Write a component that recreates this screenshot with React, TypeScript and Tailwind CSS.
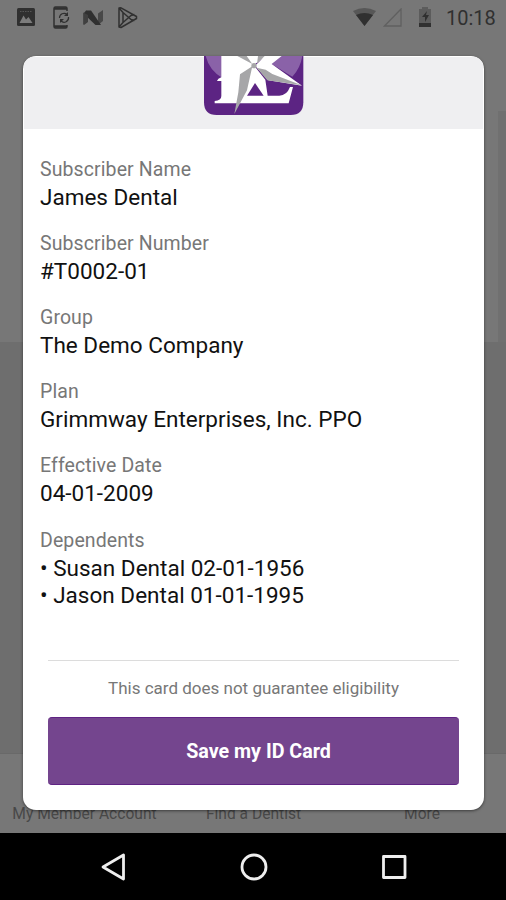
import { Fragment } from 'react'

interface Field {
  label: string
  values: string[]
}

const fields: Field[] = [
  { label: 'Subscriber Name', values: ['James Dental'] },
  { label: 'Subscriber Number', values: ['#T0002-01'] },
  { label: 'Group', values: ['The Demo Company'] },
  { label: 'Plan', values: ['Grimmway Enterprises, Inc. PPO'] },
  { label: 'Effective Date', values: ['04-01-2009'] },
  { label: 'Dependents', values: ['• Susan Dental 02-01-1956', '• Jason Dental 01-01-1995'] },
]

function StatusBar() {
  return (
    <div className="flex h-[35px] items-center text-[#303030]">
      <svg className="ml-[17px] h-[20px] w-[18px]" viewBox="0 0 18 20">
        <rect x="0" y="0" width="18" height="18" rx="1.500" fill="currentColor" />
        <path d="M2.500 15 6.500 7.500l2.500 4L11.500 9 15.500 15z" fill="#7c7c7c" />
        <path d="M3 3.500h12" stroke="#555" strokeDasharray="1.5 1" />
      </svg>
      <svg className="ml-[17px] h-[23px] w-[18px]" viewBox="0 0 18 23" fill="none" stroke="currentColor">
        <path d="M15 5V2.500Q15 1 13.500 1H3.500Q2 1 2 2.500v18Q2 22 3.500 22h10q1.500 0 1.500-1.500V19" strokeWidth="1.500" />
        <path d="M2 2.500h13M2 20.500h13" strokeWidth="2.500" />
        <path d="M7.500 12a4.500 4.500 0 0 1 7.500-3.500M16.500 11a4.500 4.500 0 0 1-7.500 4" strokeWidth="1.200" />
        <path d="M16 6v4h-4zM8 17v-4h4z" fill="currentColor" stroke="none" />
      </svg>
      <svg className="ml-[13px] h-[18px] w-[21px]" viewBox="0 0 21 18">
        <path d="M0 4 4 1.500V13l-4 3zM15 4.500 20 1v11l-5 4z" fill="#484848" />
        <path d="M3 1.500h5L18 16h-5.500L1 5z" fill="currentColor" />
        <path d="m1 4 4 2v7l-4 3z" fill="#404040" />
      </svg>
      <svg className="ml-[13px] h-[22px] w-[21px]" viewBox="0 0 21 22" fill="none" stroke="currentColor" strokeWidth="1.500" strokeLinejoin="round">
        <path d="M2 1 4 .8 19.500 9.500v2L4 20.500l-2-.5zM2 1l4 4.500 8 7 3.500 1M2 20l4-4.500 8-7 3.500-1M6 5.500v10" />
      </svg>
      <svg className="ml-[215px] h-[20px] w-[23px]" viewBox="0 0 23 20">
        <path d="M0 3Q11.500-3 23 3L11.500 18z" fill="#575757" />
        <path d="M3 7q8.500-4 17 0l-8.500 11z" fill="currentColor" />
      </svg>
      <svg className="ml-[7px] h-[20px] w-[20px]" viewBox="0 0 20 20">
        <path d="M1.500 18H18V1z" fill="none" stroke="#606060" strokeWidth="1.300" />
      </svg>
      <svg className="ml-[15px] h-[22px] w-[14px]" viewBox="0 0 14 22">
        <path d="M1 2h3V0h6v2h3v18H1z" fill="#5c5c5c" />
        <path d="M1 16h12v4H1zM9 4 4 10h3v5l4-7H8z" fill="currentColor" />
      </svg>
      <span className="ml-[14px] text-[20px]">10:18</span>
    </div>
  )
}

function Logo() {
  return (
    <svg className="h-[59px] w-[100px]" viewBox="42 33 300 177">
      <path d="M42 33h298v139q0 38-38 38H80q-38 0-38-38z" fill="#5c2483" />
      {/* Globe behind the letter */}
      <path d="M47 33h49v65Q58 76 47 33zM268 33h69q-6 37-30 62l-62-38z" fill="#8a62a8" />
      {/* Letter */}
      <path d="M94 33h136l-39 27 35 44 7 48h35q22 0 32-26h9l-13 49H74v-7q20-1 20-15v-45H81q2-7 13-11z" fill="#fff" />
      <path d="m195 114 26 38h-50z" fill="#5c2483" />
      {/* Star rays */}
      <path d="M225 33h50l-30 24 91 65-101-16-40-44z" fill="#fff" />
      <path d="M142 33h28l17 24zM204 33h20l-23 23z" fill="#a6a6a8" />
      <path d="m187 64-37 24-5 54-12 65 38-71zM200 68l32 38 103 15-88-34-20-13z" fill="#a6a6a8" />
      <circle cx="192" cy="62" r="8" fill="#a6a6a8" />
    </svg>
  )
}

function IdCard() {
  return (
    <section className="mx-[23px] mt-[21px] flex h-[754px] w-[461px] flex-col overflow-hidden rounded-[13px] bg-white shadow-[0_1px_3px_rgba(0,0,0,0.5)]">
      <header className="mx-px mt-px flex h-[72px] justify-center bg-[#efeff1]">
        <div className="-mt-px ml-[1px]">
          <Logo />
        </div>
      </header>
      <dl className="flex h-[531px] flex-col px-[17px] pt-[27px]">
        {fields.map((field) => (
          <Fragment key={field.label}>
            <dt className="h-[28px] text-[19.500px] leading-[28px] tracking-[0.1px] text-[#777]">{field.label}</dt>
            <dd className="mb-[19.120px] whitespace-nowrap text-[22.500px] leading-[27px] tracking-[0.010px] text-[#111]">
              {field.values.map((value) => (
                <div key={value}>{value}</div>
              ))}
            </dd>
          </Fragment>
        ))}
      </dl>
      <footer className="mx-[25px] border-t border-[#dcdcdc] text-center">
        <p className="h-[56px] pt-[14px] text-[17px] leading-[26px] text-[#777]">This card does not guarantee eligibility</p>
        <button className="block h-[68px] w-full rounded-[4px] border-y border-[#5f2383] bg-[#74458e] pl-[10px] pt-[2px] text-[19.700px] font-bold text-white">
          Save my ID Card
        </button>
      </footer>
    </section>
  )
}

function NavigationBar() {
  return (
    <nav className="flex h-[67px] items-center bg-black text-[#eee]">
      <svg className="ml-[100px] h-[30px] w-[28px]" viewBox="0 0 28 30" fill="none" stroke="currentColor" strokeWidth="2.800" strokeLinejoin="round">
        <path d="M3 15 23.500 3v24z" />
      </svg>
      <svg className="ml-[111px] h-[30px] w-[30px]" viewBox="0 0 30 30" fill="none" stroke="currentColor" strokeWidth="2.800">
        <circle cx="15" cy="15" r="12" />
      </svg>
      <svg className="ml-[112px] h-[26px] w-[26px]" viewBox="0 0 26 26" fill="none" stroke="currentColor" strokeWidth="2.800" strokeLinejoin="round">
        <rect x="2.500" y="2.500" width="21.500" height="21" />
      </svg>
    </nav>
  )
}

export default function App() {
  return (
    <div className="relative h-[900px] w-[506px] overflow-hidden bg-[#777] font-['Roboto',sans-serif]">
      {/* Dimmed page behind the card */}
      <div className="absolute inset-0 flex flex-col">
        <div className="flex h-[342px] items-end justify-end">
          <div className="h-[231px] w-[8px] bg-[#707070]" />
        </div>
        <div className="h-[412px] border-b border-[#696969] bg-[#6e6e6e]" />
        <div className="flex h-[79px] pt-[50px] text-[15.600px] leading-[20px] text-[#484848]">
          <span className="w-[169px] text-center">My Member Account</span>
          <span className="w-[169px] text-center">Find a Dentist</span>
          <span className="w-[168px] text-center">More</span>
        </div>
      </div>

      {/* Foreground */}
      <div className="relative flex h-full flex-col">
        <StatusBar />
        <IdCard />
        <div className="mt-auto">
          <NavigationBar />
        </div>
      </div>
    </div>
  )
}
